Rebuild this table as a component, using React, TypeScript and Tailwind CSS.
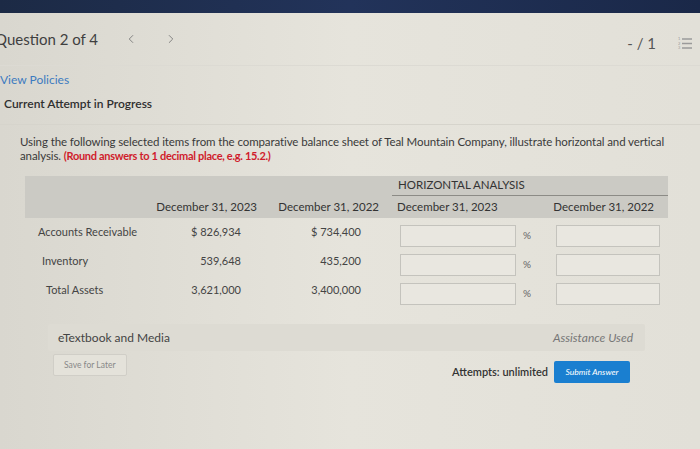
import { ChevronLeft, ChevronRight } from 'lucide-react'

const rows = [
  { label: 'Accounts Receivable', a: '$ 826,934', b: '$ 734,400', pad: 'pl-[13px]' },
  { label: 'Inventory', a: '539,648', b: '435,200', pad: 'pl-[17px]' },
  { label: 'Total Assets', a: '3,621,000', b: '3,400,000', pad: 'pl-[21px]' },
]

function ListIcon() {
  return (
    <svg width="14" height="14" viewBox="0 0 14 14" className="text-[#9a9a9a]">
      <text x="0" y="4" fontSize="4" fill="currentColor">1</text>
      <text x="0" y="8.5" fontSize="4" fill="currentColor">2</text>
      <text x="0" y="13" fontSize="4" fill="currentColor">3</text>
      <path d="M4 3h10M4 7.5h10M4 12h10" stroke="currentColor" strokeWidth="1.3" />
    </svg>
  )
}

export default function App() {
  return (
    <div className="w-[700px] h-[449px] overflow-hidden bg-gradient-to-r from-[#d9d7cf] via-[#e6e4dc] to-[#e2e0d8] text-[#3a3a3a] font-['Lato','Open_Sans',sans-serif]">
      <div className="h-[13px] bg-gradient-to-r from-[#1c2a45] via-[#22335a] to-[#1a2848]" />

      <div className="flex items-center h-[52px] pr-[8px]">
        <span className="-ml-[5px] text-[15px] text-[#3f3f3f]">Question 2 of 4</span>
        <ChevronLeft size={14} strokeWidth={1.5} className="ml-[26px] text-[#777]" />
        <ChevronRight size={14} strokeWidth={1.5} className="ml-[26px] text-[#777]" />
        <div className="ml-auto flex items-center gap-[22px] mt-[8px]">
          <span className="text-[15px] text-[#555]">- / 1</span>
          <ListIcon />
        </div>
      </div>

      <div className="border-t border-[#dcdad3] pt-[4px]">
        <div className="text-[12px] text-[#3d7bc0] leading-[20px]">View Policies</div>
        <div className="text-[12px] font-semibold text-[#2f2f2f] leading-[20px] mt-[4px] pl-[4px]">
          Current Attempt in Progress
        </div>
      </div>

      <div className="mt-[10px] border-t border-[#d6d4cc] pl-[20px] pr-[8px] pt-[10px] text-[11.5px] leading-[14px] tracking-[-0.1px] text-[#3a3a3a]">
        Using the following selected items from the comparative balance sheet of Teal Mountain Company, illustrate horizontal and vertical analysis.{' '}
        <span className="text-[#d01c2c] font-bold text-[11px] tracking-[-0.3px]">(Round answers to 1 decimal place, e.g. 15.2.)</span>
      </div>

      <div className="ml-[25px] mr-[32px] mt-[13px]">
        <div className="bg-[#cbcac4] h-[42px] grid grid-cols-[125px_115px_122px_160px_121px] text-[11.5px] text-[#333]">
          <div />
          <div className="self-end pb-[4px] text-right pr-[8px]">December 31, 2023</div>
          <div className="self-end pb-[4px] text-right pr-[8px]">December 31, 2022</div>
          <div className="flex flex-col justify-end pl-[5px]">
            <div className="border-b border-[#8c8b86] pl-[6px] pb-[2px] -mr-[121px]">HORIZONTAL ANALYSIS</div>
            <div className="pl-[5px] pt-[2px] pb-[4px]">December 31, 2023</div>
          </div>
          <div className="self-end pb-[4px] text-right pr-[14px]">December 31, 2022</div>
        </div>

        {rows.map((r) => (
          <div key={r.label} className="grid grid-cols-[125px_115px_122px_160px_121px] h-[29px] items-center text-[11px] text-[#444]">
            <div className={r.pad}>{r.label}</div>
            <div className="text-right pr-[24px]">{r.a}</div>
            <div className="text-right pr-[26px]">{r.b}</div>
            <div className="flex items-center pl-[13px] pt-[6px]">
              <div className="w-[116px] h-[22px] border border-[#c4c3bd] bg-[#e9e7e0]" />
              <span className="ml-[7px] text-[10px] text-[#666]">%</span>
            </div>
            <div className="pl-[9px] pt-[6px]">
              <div className="w-[104px] h-[22px] border border-[#c4c3bd] bg-[#e9e7e0]" />
            </div>
          </div>
        ))}
      </div>

      <div className="ml-[48px] mr-[55px] mt-[19px] h-[27px] bg-[#dddbd3] rounded-[2px] flex items-center justify-between px-[10px] text-[12px]">
        <span className="text-[#444]">eTextbook and Media</span>
        <span className="italic text-[#777] pr-[2px]">Assistance Used</span>
      </div>

      <div className="ml-[53px] mr-[70px] mt-[3px] flex items-start">
        <button className="h-[22px] px-[10px] border border-[#d0cec7] rounded-[2px] bg-[#e4e2da] text-[8.5px] text-[#888]">
          Save for Later
        </button>
        <div className="ml-auto flex items-center mt-[7px]">
          <span className="text-[11px] font-semibold text-[#333]">Attempts: unlimited</span>
          <button className="ml-[6px] h-[22px] w-[76px] rounded-[2px] bg-[#1a7fd0] text-[8.5px] italic text-white">
            Submit Answer
          </button>
        </div>
      </div>
    </div>
  )
}
